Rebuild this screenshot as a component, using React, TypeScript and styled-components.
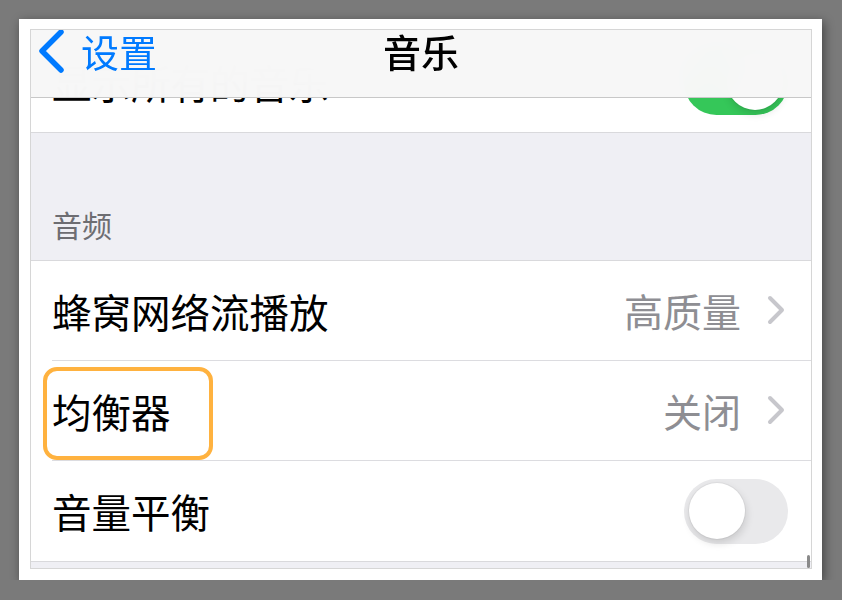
import React from 'react';
import styled, { createGlobalStyle } from 'styled-components';

const GlobalStyle = createGlobalStyle`
  body {
    margin: 0;
    background: #7a7a7a;
    font-family: "Noto Sans CJK SC", "Noto Sans", sans-serif;
  }
`;

const Page = styled.div`
  padding: 19px 0 0 19px;
`;

const Frame = styled.div`
  width: 803px;
  height: 561px;
  box-sizing: border-box;
  padding: 10px 10px 11px 11px;
  background: #ffffff;
  box-shadow: 2px 3px 10px rgba(0, 0, 0, 0.45);
`;

const Screen = styled.div`
  position: relative;
  height: 100%;
  box-sizing: border-box;
  overflow: hidden;
  border: 1px solid #d6d6d6;
  background: #efeff4;
`;

// translucent bar floating over the scrolled list
const NavBar = styled.div`
  position: absolute;
  top: 0;
  left: 0;
  right: 0;
  height: 67px;
  border-bottom: 1px solid #c8c8c8;
  background: rgba(247, 247, 247, 0.985);
  backdrop-filter: blur(20px);
  z-index: 2;
`;

const NavRow = styled.div`
  position: relative;
  height: 42px;
  display: flex;
  align-items: center;
  justify-content: center;
`;

const BackButton = styled.div`
  position: absolute;
  left: 4px;
  top: 0;
  height: 42px;
  display: flex;
  align-items: center;
  gap: 16px;
  color: #007aff;
  font-size: 38px;
  line-height: 1.1;
`;

const Title = styled.div`
  font-size: 38px;
  font-weight: 500;
  color: #000;
  line-height: 1.1;
`;

const Content = styled.div`
  padding-top: 2px;
`;

const Group = styled.div<{ $top?: boolean }>`
  background: #fff;
  border-bottom: 1px solid #d9d9dc;
  border-top: ${(p) => (p.$top ? '1px solid #d9d9dc' : 'none')};
`;

const SectionHeader = styled.div`
  height: 127px;
  box-sizing: border-box;
  display: flex;
  align-items: flex-end;
  padding: 0 0 18px 21px;
  font-size: 30px;
  line-height: 36px;
  color: #6d6d72;
`;

const Row = styled.div`
  position: relative;
  display: flex;
  padding-left: 21px;
`;

const RowInner = styled.div<{ $last?: boolean }>`
  flex: 1;
  height: ${(p) => (p.$last ? 100 : 99)}px;
  display: flex;
  align-items: center;
  justify-content: space-between;
  padding-right: 23px;
  border-bottom: ${(p) => (p.$last ? 'none' : '1px solid #dcdce0')};
`;

const Label = styled.div`
  font-size: 39.5px;
  color: #000;
  line-height: 1.2;
`;

const Detail = styled.div`
  display: flex;
  align-items: center;
  gap: 26px;
  padding-right: 3px;
  font-size: 39px;
  color: #8e8e93;
  line-height: 1.2;
`;

const Switch = styled.div<{ $on?: boolean }>`
  width: 104px;
  height: 65px;
  box-sizing: border-box;
  border-radius: 33px;
  padding: 4px 5px;
  display: flex;
  align-items: center;
  justify-content: ${(p) => (p.$on ? 'flex-end' : 'flex-start')};
  background: ${(p) => (p.$on ? '#35c759' : '#e9e9eb')};
`;

const Knob = styled.div`
  width: 56px;
  height: 56px;
  border-radius: 50%;
  background: #fff;
  box-shadow: 1px 4px 8px rgba(0, 0, 0, 0.14), 0 0 0 1px rgba(0, 0, 0, 0.04);
`;

const Highlight = styled.div`
  position: absolute;
  left: 12px;
  top: 6px;
  width: 170px;
  height: 93px;
  box-sizing: border-box;
  border: 4px solid #ffb23f;
  border-radius: 14px;
  pointer-events: none;
`;

const ScrollIndicator = styled.div`
  position: absolute;
  right: 1px;
  bottom: 0;
  width: 3px;
  height: 13px;
  border-radius: 1.5px;
  background: #8a8a8a;
`;

const Chevron = () => (
  <svg width="18" height="30" viewBox="0 0 18 30">
    <path d="M3 3 L15 15 L3 27" fill="none" stroke="#c7c7cc" strokeWidth="4" strokeLinecap="round" strokeLinejoin="round" />
  </svg>
);

const BackChevron = () => (
  <svg width="30" height="44" viewBox="0 0 30 44">
    <path d="M26 3 L7 22 L26 41" fill="none" stroke="#007aff" strokeWidth="5.5" strokeLinecap="round" strokeLinejoin="round" />
  </svg>
);

export default function App() {
  return (
    <>
      <GlobalStyle />
      <Page>
        <Frame>
          <Screen>
            <NavBar>
              <NavRow>
                <BackButton>
                  <BackChevron />
                  <span>设置</span>
                </BackButton>
                <Title>音乐</Title>
              </NavRow>
            </NavBar>
            <Content>
              <Group>
                <Row>
                  <RowInner $last>
                    <Label>显示所有的音乐</Label>
                    <Switch $on>
                      <Knob />
                    </Switch>
                  </RowInner>
                </Row>
              </Group>
              <SectionHeader>音频</SectionHeader>
              <Group $top>
                <Row>
                  <RowInner>
                    <Label>蜂窝网络流播放</Label>
                    <Detail>
                      高质量
                      <Chevron />
                    </Detail>
                  </RowInner>
                </Row>
                <Row>
                  <RowInner>
                    <Label>均衡器</Label>
                    <Detail>
                      关闭
                      <Chevron />
                    </Detail>
                  </RowInner>
                  <Highlight />
                </Row>
                <Row>
                  <RowInner $last>
                    <Label>音量平衡</Label>
                    <Switch>
                      <Knob />
                    </Switch>
                  </RowInner>
                </Row>
              </Group>
            </Content>
            <ScrollIndicator />
          </Screen>
        </Frame>
      </Page>
    </>
  );
}
